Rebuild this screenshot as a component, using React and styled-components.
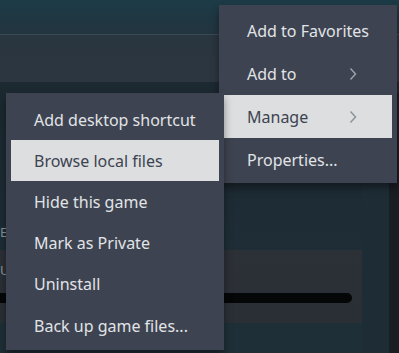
import React from "react";
import styled, { createGlobalStyle } from "styled-components";

const GlobalStyle = createGlobalStyle`
  html, body {
    margin: 0;
    padding: 0;
    background: #1b262e;
  }
  * { box-sizing: border-box; }
`;

const Page = styled.div`
  position: relative;
  width: 399px;
  height: 353px;
  overflow: hidden;
  display: flex;
  flex-direction: column;
  background: #1c2931;
  font-family: "Noto Sans", "Open Sans", sans-serif;
`;

const TopBar = styled.div`
  height: 35px;
  flex: none;
  background: linear-gradient(180deg, #1c3b47 0%, #22343f 100%);
  border-bottom: 1px solid #3a4a54;
`;

const SubHeader = styled.div`
  height: 47px;
  flex: none;
  background: linear-gradient(180deg, #29353f 0%, #2c3640 100%);
`;

const Gap = styled.div`
  height: 11px;
  flex: none;
  background: #1c2931;
`;

const Body = styled.div`
  flex: 1;
  display: flex;
`;

const MainCol = styled.div`
  width: 362px;
  display: flex;
  flex-direction: column;
`;

const Upper = styled.div`
  height: 157px;
  flex: none;
  display: flex;
  flex-direction: column;
  justify-content: flex-end;
  padding: 0 0 10px 0;
  background: linear-gradient(180deg, #1c2830 0%, #1e2d36 100%);
`;

const GhostLabel = styled.div`
  font-size: 13px;
  color: #8a939b;
  height: 16px;
  line-height: 16px;
`;

const Panel = styled.div`
  height: 73px;
  flex: none;
  display: flex;
  flex-direction: column;
  padding-top: 12px;
  background: linear-gradient(180deg, #2c3037 0%, #2a2f36 100%);
`;

const Bar = styled.div`
  margin-top: 15px;
  width: 352px;
  height: 10px;
  border-radius: 0 5px 5px 0;
  background: #050607;
`;

const PanelFoot = styled.div`
  flex: 1;
  background: #1f2f37;
`;

const SideStrip = styled.div`
  flex: 1;
  display: flex;
`;

const SideTeal = styled.div`
  width: 27px;
  background: #1e2d35;
`;

const SideDark = styled.div`
  flex: 1;
  background: #191e23;
`;

const Menu = styled.div`
  position: absolute;
  left: ${p => p.$x}px;
  top: ${p => p.$y}px;
  width: ${p => p.$w}px;
  padding: ${p => p.$pad};
  background: #3d4350;
  box-shadow: 0 5px 8px rgba(0, 0, 0, 0.4);
  z-index: ${p => p.$z};
  display: flex;
  flex-direction: column;
`;

const Item = styled.div`
  height: ${p => p.$h}px;
  display: flex;
  align-items: center;
  justify-content: space-between;
  padding: 0 35px 0 23px;
  font-size: 16px;
  color: ${p => (p.$active ? "#3d4350" : "#e1e4e7")};
  background: ${p => (p.$active ? "#dcdee0" : "transparent")};
  white-space: nowrap;
`;

const Chevron = ({ active }) => (
  <svg width="8" height="14" viewBox="0 0 8 14">
    <polyline
      points="1.5,1.5 6.5,7 1.5,12.5"
      fill="none"
      stroke={active ? "#8e939b" : "#9ba1a9"}
      strokeWidth="1.5"
    />
  </svg>
);

const mainItems = [
  { label: "Add to Favorites" },
  { label: "Add to", sub: true },
  { label: "Manage", sub: true, active: true },
  { label: "Properties..." },
];

const manageItems = [
  { label: "Add desktop shortcut" },
  { label: "Browse local files", active: true },
  { label: "Hide this game" },
  { label: "Mark as Private" },
  { label: "Uninstall" },
  { label: "Back up game files..." },
];

export default function App() {
  return (
    <Page>
      <GlobalStyle />
      <TopBar />
      <SubHeader />
      <Gap />
      <Body>
        <MainCol>
          <Upper>
            <GhostLabel>E</GhostLabel>
          </Upper>
          <Panel>
            <GhostLabel>UI</GhostLabel>
            <Bar />
          </Panel>
          <PanelFoot />
        </MainCol>
        <SideStrip>
          <SideTeal />
          <SideDark />
        </SideStrip>
      </Body>

      <Menu $x={219} $y={5} $w={178} $pad="4px 5px 2px" $z={1}>
        {mainItems.map(it => (
          <Item key={it.label} $h={43} $active={it.active}>
            <span>{it.label}</span>
            {it.sub && <Chevron active={it.active} />}
          </Item>
        ))}
      </Menu>

      <Menu $x={6} $y={93} $w={218} $pad="6px 5px 4px" $z={2}>
        {manageItems.map(it => (
          <Item key={it.label} $h={41.2} $active={it.active}>
            <span>{it.label}</span>
          </Item>
        ))}
      </Menu>
    </Page>
  );
}
